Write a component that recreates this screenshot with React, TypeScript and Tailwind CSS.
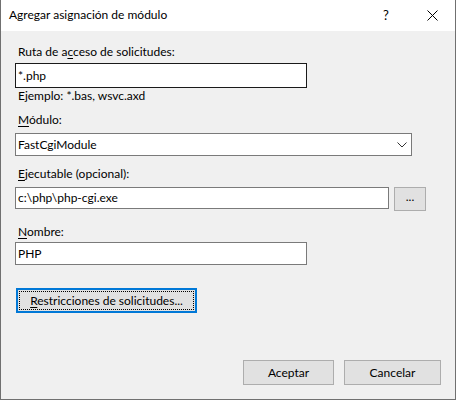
import React from "react";

const font = { fontFamily: 'Lato, "Noto Sans", sans-serif' };

const Label = ({ pre = "", k, rest, className = "" }: { pre?: string; k: string; rest: string; className?: string }) => (
  <div className={`h-4 text-[12px] leading-4 text-black ${className}`}>
    {pre}
    <span className="underline underline-offset-2">{k}</span>
    {rest}
  </div>
);

const Field = ({ value, width, className = "" }: { value: string; width: string; className?: string }) => (
  <div
    className={`flex items-center bg-white border px-[2px] text-[12px] text-black ${width} ${className}`}
  >
    {value}
  </div>
);

const Btn = ({ children, className = "" }: { children: React.ReactNode; className?: string }) => (
  <button className={`flex items-center justify-center bg-[#e1e1e1] border border-[#adadad] text-[12px] text-black ${className}`}>
    {children}
  </button>
);

export default function App() {
  return (
    <div className="w-[457px] h-[401px] bg-white" style={font}>
      <div className="w-[456px] h-[400px] flex flex-col border-x border-b border-[#707070] bg-[#f0f0f0]">
        {/* title bar */}
        <div className="h-[31px] shrink-0 bg-white flex items-center pl-[8px] text-[12px] text-black">
          <span className="flex-1 pb-[1px]">Agregar asignación de módulo</span>
          <span className="w-[12px] mr-[32px] text-[13px]">?</span>
          <svg className="mr-[17px]" width="11" height="11" viewBox="0 0 11 11">
            <path d="M0.5 0.5 L10.5 10.5 M10.5 0.5 L0.5 10.5" stroke="#000" strokeWidth="1" />
          </svg>
        </div>

        <div className="flex flex-col pl-[14px]">
          <Label className="mt-[13px] ml-[3px]" pre="Ruta de a" k="c" rest="ceso de solicitudes:" />
          <Field value="*.php" width="w-[292px]" className="h-[25px] mt-[3px] border-[#1a1a1a]" />
          <div className="h-4 text-[12px] leading-4 ml-[3px] text-black">Ejemplo: *.bas, wsvc.axd</div>

          <Label className="mt-[8px] ml-[3px]" k="M" rest="ódulo:" />
          <div className="mt-[5px] w-[397px] h-[23px] flex items-center justify-between bg-white border border-[#7a7a7a] pl-[2px] pr-[4px] text-[12px] text-black">
            <span>FastCgiModule</span>
            <svg width="10" height="6" viewBox="0 0 10 6">
              <path d="M0.5 0.5 L5 5 L9.5 0.5" fill="none" stroke="#333" strokeWidth="1" />
            </svg>
          </div>

          <Label className="mt-[10px] ml-[3px]" k="E" rest="jecutable (opcional):" />
          <div className="mt-[5px] flex items-start">
            <Field value="c:\php\php-cgi.exe" width="w-[374px]" className="h-[22px] border-[#7a7a7a]" />
            <Btn className="ml-[5px] w-[32px] h-[24px] pb-[4px]">...</Btn>
          </div>

          <Label className="mt-[13px] ml-[3px]" k="N" rest="ombre:" />
          <Field value="PHP" width="w-[292px]" className="h-[23px] mt-[2px] border-[#7a7a7a]" />

          <button className="mt-[23px] ml-[1px] w-[181px] h-[25px] border-2 border-[#0078d7] bg-[#e1e1e1] p-px">
            <div className="h-full border border-dotted border-black flex items-center justify-center text-[12px] text-black">
              <span>
                <span className="underline underline-offset-2">R</span>estricciones de solicitudes...
              </span>
            </div>
          </button>
        </div>

        <div className="mt-auto mb-[14px] flex justify-end pr-[14px] gap-[10px]">
          <Btn className="w-[91px] h-[25px]">Aceptar</Btn>
          <Btn className="w-[97px] h-[25px]">Cancelar</Btn>
        </div>
      </div>
    </div>
  );
}
